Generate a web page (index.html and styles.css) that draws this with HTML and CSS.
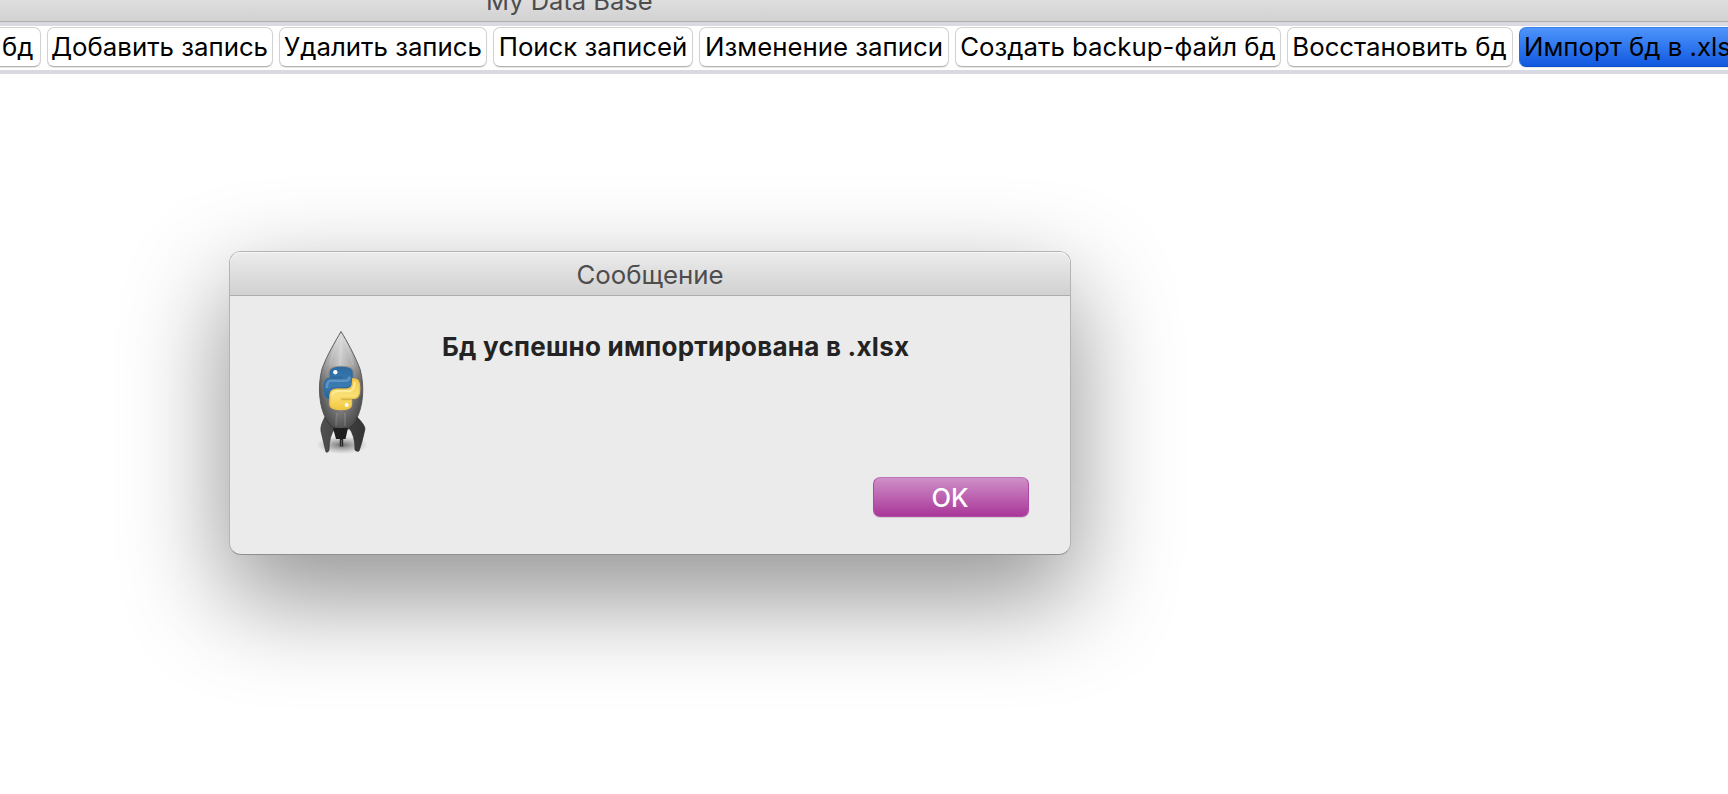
FILE: index.html
```html
<!DOCTYPE html>
<html lang="ru">
<head>
<meta charset="utf-8">
<title>My Data Base</title>
<link rel="stylesheet" href="styles.css">
</head>
<body>
<header class="titlebar"><span class="window-title">My Data Base</span></header>
<nav class="toolbar">
  <button class="tool tool-cut">бд</button>
  <button class="tool tool-add">Добавить запись</button>
  <button class="tool tool-delete">Удалить запись</button>
  <button class="tool tool-search">Поиск записей</button>
  <button class="tool tool-edit">Изменение записи</button>
  <button class="tool tool-backup">Создать backup-файл бд</button>
  <button class="tool tool-restore">Восстановить бд</button>
  <button class="tool tool-active">Импорт бд в .xlsx</button>
</nav>
<main class="workspace">
  <section class="dialog">
    <h1 class="dialog-title"><span>Сообщение</span></h1>
    <div class="dialog-body">
      <svg class="rocket" width="100" height="160" viewBox="0 0 100 160">
        <defs>
          <linearGradient id="hull" x1="0" x2="1" y1="0" y2="0">
            <stop offset="0" stop-color="#5c5c5c"/><stop offset=".2" stop-color="#858585"/><stop offset=".48" stop-color="#b4b4b4"/><stop offset=".75" stop-color="#8c8c8c"/><stop offset="1" stop-color="#555"/>
          </linearGradient>
          <linearGradient id="shade" x1="0" x2="0" y1="0" y2="1">
            <stop offset="0" stop-color="#fff" stop-opacity=".55"/><stop offset=".35" stop-color="#fff" stop-opacity=".25"/><stop offset=".65" stop-color="#333" stop-opacity=".15"/><stop offset="1" stop-color="#222" stop-opacity=".68"/>
          </linearGradient>
          <linearGradient id="blue" x1="0" x2="0" y1="0" y2="1"><stop offset="0" stop-color="#2d6da4"/><stop offset=".6" stop-color="#3b7bb2"/><stop offset="1" stop-color="#285f94"/></linearGradient>
          <linearGradient id="yellow" x1="0" x2="0" y1="0" y2="1"><stop offset="0" stop-color="#f2c94b"/><stop offset=".55" stop-color="#fadf75"/><stop offset="1" stop-color="#f3c73e"/></linearGradient>
          <linearGradient id="fin" x1="0" x2="1"><stop offset="0" stop-color="#505050"/><stop offset="1" stop-color="#343434"/></linearGradient>
          <radialGradient id="ground"><stop offset="0" stop-color="#555" stop-opacity=".85"/><stop offset="1" stop-color="#888" stop-opacity="0"/></radialGradient>
        </defs>
        <ellipse cx="52" cy="135" rx="26" ry="9" fill="url(#ground)"/>
        <path d="M51 21.500C45 32 37 45 32 59C27.500 76 29 96 36 109Q40 118 44 119H59Q63 118 66 110C73 97 75 77 70 59C65 46 57 31 51 21.500Z" fill="url(#hull)"/>
        <path d="M51 21.500C45 32 37 45 32 59C27.500 76 29 96 36 109Q40 118 44 119H59Q63 118 66 110C73 97 75 77 70 59C65 46 57 31 51 21.500Z" fill="url(#shade)" stroke="#555" stroke-width=".9"/>
        <path d="M49 28Q42 44 40 55M52 28L50 55M54 30Q61 44 63 55M47 103L46 116M55 103V116" fill="none" stroke="#fff" stroke-opacity=".12" stroke-width="2"/>
        <path d="M35 107Q30 116 31 121Q34 134 36 142Q38 143 39 140Q39 126 45 118Q39 116 35 107ZM67 107Q75 115 75 119Q72 133 69 141Q67 142 65 140Q65 125 59 118Q65 115 67 107Z" fill="url(#fin)" stroke="#303030" stroke-width=".7"/>
        <path d="M43 118H58L55.500 129H46Z" fill="#1e1e1e"/>
        <path d="M51.500 129V136.500" stroke="#2a2a2a" stroke-width="3.400"/>
        <path d="M51.500 130V136" stroke="#666" stroke-width=".8"/>
        <g transform="translate(-1.300 -2.300) scale(1.030)">
          <g fill="#777" stroke="#777" stroke-opacity=".6" stroke-width="3.500">
            <path d="M40.500 67.500V63Q40.500 58 51 58Q61.500 58 61.500 63V72Q61.500 77.500 56 77.500H46Q40 77.500 40 84V88H38.500Q34.300 88 34.300 78Q34.300 68.500 40 68.500H52V67.500Z"/>
            <path d="M62 69H64Q69 69 69 78.500Q69 88 64 88H51V89.500H61V94Q61 99 51 99Q40 99 40 94V85Q40 79 47 79H56Q62 79 62 72Z"/>
          </g>
          <path d="M40.500 67.500V63Q40.500 58 51 58Q61.500 58 61.500 63V72Q61.500 77.500 56 77.500H46Q40 77.500 40 84V88H38.500Q34.300 88 34.300 78Q34.300 68.500 40 68.500H52V67.500Z" fill="url(#blue)" stroke="#2d6ba0" stroke-width="1.200"/>
          <path d="M62 69H64Q69 69 69 78.500Q69 88 64 88H51V89.500H61V94Q61 99 51 99Q40 99 40 94V85Q40 79 47 79H56Q62 79 62 72Z" fill="url(#yellow)" stroke="#efc548" stroke-width="1.200"/>
          <path d="M37 78Q37 71 41 71H55Q59 71 59 67" fill="none" stroke="#78aad1" stroke-opacity=".6" stroke-width="2.500"/>
          <path d="M42 85Q43 81 48 81H59Q64 80 64 72" fill="none" stroke="#fff2a8" stroke-opacity=".75" stroke-width="2"/>
          <circle cx="45.300" cy="62.700" r="2.100" fill="#fff"/><circle cx="56.300" cy="94.500" r="2" fill="#fffdf0"/>
        </g>
      </svg>
      <p class="message">Бд успешно импортирована в .xlsx</p>
      <button class="ok">OK</button>
    </div>
  </section>
</main>
</body>
</html>
```
FILE: styles.css
```css
* { box-sizing: border-box; }
body { margin: 0; height: 794px; overflow: hidden; background: #fff; font-family: Inter, "Liberation Sans", sans-serif; display: flex; flex-direction: column; }
.titlebar { height: 22px; flex: none; background: linear-gradient(#dedede, #d2d2d2); border-bottom: 1px solid #adadad; display: flex; align-items: flex-end; padding: 0 0 5px 486px; }
.window-title { font-size: 25.500px; line-height: 30px; color: #4d4d4d; white-space: nowrap; }
.toolbar { height: 52px; flex: none; border: solid #d9d9e2; border-width: 4px 0; display: flex; gap: 6px; padding-top: 1px; overflow: hidden; }
.tool { flex: none; height: 40px; padding: 0; border: 1px solid #d2d2d2; border-bottom-color: #b4b4b4; border-radius: 7px; background: #fff; box-shadow: 0 1px 1px #0000001a; font: 25.800px/38px Inter, sans-serif; color: #000; white-space: nowrap; }
.tool-cut { width: 41px; padding: 0 6px 0 2px; text-align: left; border-left: 0; border-radius: 0 7px 7px 0; }
.tool-add { width: 226px; padding-right: 1px; }
.tool-delete { width: 208px; }
.tool-search { width: 200px; }
.tool-edit { width: 250px; }
.tool-backup { width: 326px; }
.tool-restore { width: 226px; padding-right: 1px; }
.tool-active { width: 240px; padding-left: 4px; text-align: left; background: linear-gradient(#4e94fb, #1059e0); border-color: #3d83ec #2a6fe0 #0e50ce; }
.workspace { flex: 1; padding: 177px 0 0 229px; }
.dialog { width: 842px; height: 304px; border: 1px solid #b4b4b4; border-bottom-color: #8f8f8f; border-radius: 12px; background: #ebebeb; box-shadow: 0 40px 100px 4px rgba(0,0,0,.42); }
.dialog-title { height: 44px; margin: 0; border-radius: 11px 11px 0 0; border-bottom: 1px solid #adadad; background: linear-gradient(#ececec, #d1d1d1); box-shadow: inset 0 1px #f6f6f6; text-align: center; font-weight: 400; font-size: 25.800px; line-height: 46px; color: #4d4d4d; }
.dialog-body { display: grid; grid-template-columns: 152px 491px 156px; grid-template-rows: 181px 40px; }
.rocket { margin: 14px 0 0 60px; overflow: visible; }
.message { margin: 34px 0 0 60px; grid-column: 2 / 4; font-weight: 700; font-size: 26px; letter-spacing: .24px; line-height: 34px; color: #232323; white-space: nowrap; }
.ok { grid-column: 3; width: 156px; height: 40px; padding: 2px 2px 0 0; border: 1px solid #b04aa4; border-top-color: #bd75b6; border-radius: 7px; background: linear-gradient(#cf8fc8, #a93799); box-shadow: 0 1px 1px #0002; color: #fff; font: 500 25.500px/36px Inter, sans-serif; }
```
